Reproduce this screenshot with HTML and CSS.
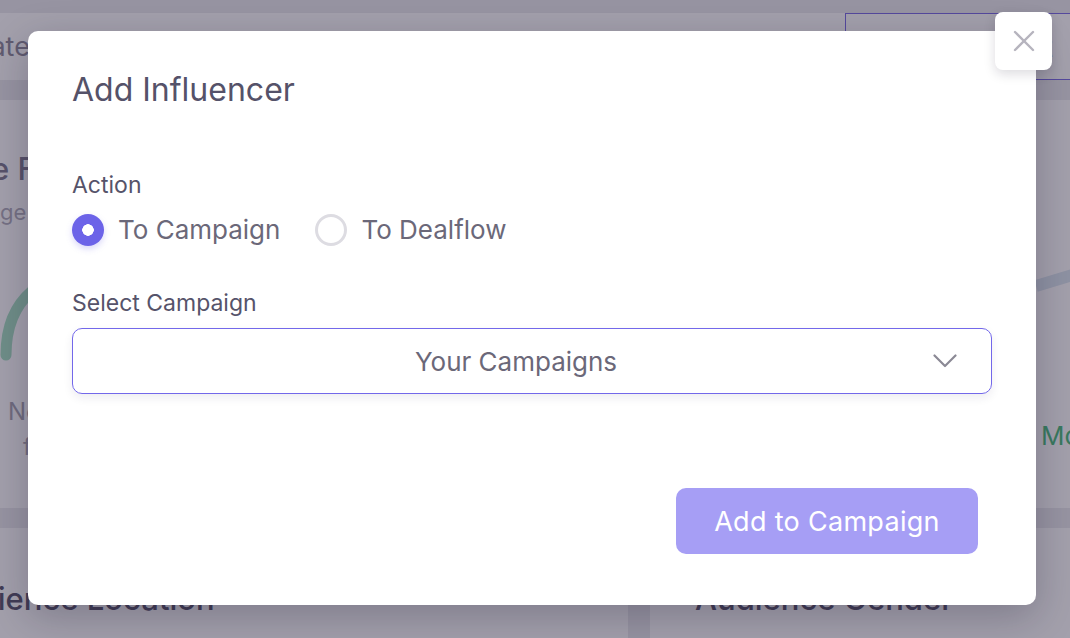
FILE: index.html
```html
<!DOCTYPE html>
<html lang="en">
<head>
<meta charset="utf-8">
<title>Add Influencer</title>
<link rel="stylesheet" href="styles.css">
</head>
<body>
<div class="page">
  <header class="head">
    <span class="head-title">Private</span>
    <button class="head-btn" type="button">Edit</button>
  </header>
  <div class="row row-top">
    <section class="card card-left">
      <h2 class="card-title">Influence Factor</h2>
      <p class="card-sub">Average engagement</p>
      <svg class="gauge" width="40" height="80" viewBox="0 0 40 80"><path d="M10 72 Q 10 30 36 8" fill="none" stroke="#a9e2c4" stroke-width="11" stroke-linecap="round"/></svg>
      <p class="card-note">Not</p>
      <p class="card-note2">fake</p>
    </section>
    <section class="card card-right">
      <svg class="trend" width="60" height="40" viewBox="0 0 60 40"><path d="M0 24 L60 6" fill="none" stroke="#dde8f0" stroke-width="12"/></svg>
      <p class="card-green">5 Months</p>
    </section>
  </div>
  <div class="row row-bottom">
    <section class="card card-left"><h2 class="card-title2">Audience Location</h2></section>
    <section class="card card-right"><h2 class="card-title3">Audience Gender</h2></section>
  </div>
</div>

<div class="overlay">
  <div class="modal" role="dialog" aria-label="Add Influencer">
    <button class="close" type="button" aria-label="Close">
      <svg width="22" height="22" viewBox="0 0 22 22"><path d="M2 2 L20 20 M20 2 L2 20" stroke="#b6b4be" stroke-width="2.4" stroke-linecap="round"/></svg>
    </button>
    <h1 class="modal-title">Add Influencer</h1>
    <div class="field field-action">
      <span class="label">Action</span>
      <div class="radios">
        <label class="radio"><span class="dot dot-on"></span><span class="radio-text">To Campaign</span></label>
        <label class="radio"><span class="dot"></span><span class="radio-text">To Dealflow</span></label>
      </div>
    </div>
    <div class="field field-select">
      <span class="label">Select Campaign</span>
      <div class="select">
        <span class="select-text">Your Campaigns</span>
        <svg class="chev" width="24" height="14" viewBox="0 0 24 14"><path d="M1.5 1.5 L12 12 L22.5 1.5" fill="none" stroke="#8b8995" stroke-width="2.2" stroke-linecap="round" stroke-linejoin="round"/></svg>
      </div>
    </div>
    <div class="footer">
      <button class="submit" type="button">Add to Campaign</button>
    </div>
  </div>
</div>
</body>
</html>
```
FILE: styles.css
```css
* { box-sizing: border-box; }
html, body { margin: 0; padding: 0; }
body {
  width: 1070px;
  height: 638px;
  overflow: hidden;
  background: #ebebee;
  font-family: Inter, "Noto Sans", sans-serif;
  position: relative;
}
.page { padding-top: 13px; }
.head {
  height: 67px;
  background: #ffffff;
  display: flex;
  align-items: center;
  overflow: hidden;
}
.head-title {
  font-size: 27px;
  color: #8f8c9c;
  margin-left: -59px;
}
.head-btn {
  margin-left: auto;
  margin-right: -20px;
  width: 245px;
  height: 67px;
  background: #ffffff;
  border: 1.5px solid #7d6fe6;
  font-family: inherit;
  font-size: 29px;
  color: #7d6fe6;
  text-align: left;
  padding-left: 155px;
}
.row { display: flex; gap: 22px; margin-top: 20px; }
.row-top { height: 408px; }
.row-bottom { height: 130px; }
.card { background: #ffffff; overflow: hidden; }
.card-left { width: 628px; flex: none; }
.card-right { flex: 1; }
.card-title {
  margin: 50px 0 0 -129px;
  font-size: 31px;
  font-weight: 500;
  color: #807e92;
  white-space: nowrap;
}
.card-sub {
  margin: 12px 0 0 -59px;
  font-size: 22px;
  color: #b3b1bd;
  white-space: nowrap;
}
.gauge { display: block; margin: 58px 0 0 -4px; }
.card-note {
  margin: 34px 0 0 8px;
  font-size: 24px;
  color: #a9a7b3;
}
.card-note2 {
  margin: 6px 0 0 23px;
  font-size: 24px;
  color: #a9a7b3;
}
.trend { display: block; margin: 162px 0 0 386px; }
.card-green {
  margin: 118px 0 0 368px;
  font-size: 26px;
  color: #4fbf7f;
  white-space: nowrap;
}
.card-title2 {
  margin: 52px 0 0 -62px;
  font-size: 31px;
  font-weight: 500;
  color: #5c596f;
  white-space: nowrap;
}
.card-title3 {
  margin: 52px 0 0 45px;
  font-size: 31px;
  font-weight: 500;
  color: #5c596f;
  white-space: nowrap;
}

.overlay {
  position: absolute;
  inset: 0;
  background: rgba(25, 17, 47, 0.4);
  display: flex;
  align-items: center;
  justify-content: center;
  padding: 0 6px 2px 0;
}
.modal {
  position: relative;
  width: 1008px;
  height: 574px;
  background: #ffffff;
  border-radius: 10px;
  box-shadow: 0 12px 40px rgba(20, 14, 40, 0.25);
  padding: 41px 44px 51px 44px;
  display: flex;
  flex-direction: column;
}
.close {
  position: absolute;
  top: -19px;
  right: -16px;
  width: 57px;
  height: 58px;
  border: none;
  border-radius: 8px;
  background: #ffffff;
  box-shadow: 0 4px 12px rgba(20, 14, 40, 0.15);
  display: flex;
  align-items: center;
  justify-content: center;
  padding: 0;
}
.modal-title {
  margin: 0;
  font-size: 32px;
  line-height: 36px;
  font-weight: 400;
  color: #555269;
}
.field { display: flex; flex-direction: column; }
.field-action { margin-top: 63px; }
.field-select { margin-top: 43px; }
.label {
  font-size: 23px;
  line-height: 28px;
  color: #56536a;
}
.radios { display: flex; gap: 35px; margin-top: 15px; }
.radio { display: flex; align-items: center; gap: 14px; }
.dot {
  width: 32px;
  height: 32px;
  border-radius: 50%;
  border: 3px solid #dddce2;
  background: #ffffff;
  flex: none;
}
.dot-on {
  border: none;
  background: radial-gradient(circle, #ffffff 0 5.5px, #6c63e8 6px);
  box-shadow: 0 3px 6px rgba(108, 99, 232, 0.25);
}
.radio-text {
  font-size: 26px;
  line-height: 32px;
  color: #6b6879;
}
.select {
  margin-top: 11px;
  height: 66px;
  border: 1.5px solid #7368ea;
  border-radius: 10px;
  box-shadow: 0 4px 10px rgba(40, 30, 80, 0.08);
  display: flex;
  align-items: center;
  padding: 0 34px 0 46px;
}
.select-text {
  flex: 1;
  text-align: center;
  font-size: 26px;
  color: #6b6879;
}
.chev { flex: none; margin-left: 20px; }
.footer {
  margin-top: auto;
  display: flex;
  justify-content: flex-end;
  padding-right: 14px;
}
.submit {
  width: 302px;
  height: 66px;
  border: none;
  border-radius: 10px;
  background: #a69ef5;
  color: #ffffff;
  font-family: inherit;
  font-size: 27px;
  letter-spacing: 0.3px;
}
```
